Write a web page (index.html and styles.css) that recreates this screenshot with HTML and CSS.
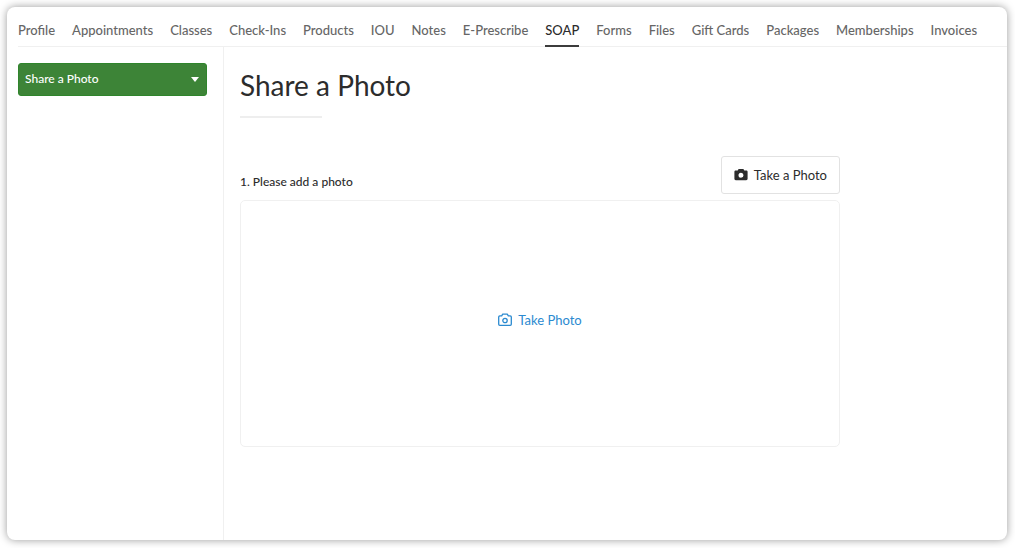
FILE: index.html
```html
<!DOCTYPE html>
<html lang="en">
<head>
  <meta charset="utf-8">
  <title>Share a Photo</title>
  <meta name="viewport" content="width=device-width, initial-scale=1.0">
  <link rel="stylesheet" href="styles.css">
</head>
<body>
  <div class="card">
    <nav class="tabs">
      <a href="#">Profile</a>
      <a href="#">Appointments</a>
      <a href="#">Classes</a>
      <a href="#">Check-Ins</a>
      <a href="#">Products</a>
      <a href="#">IOU</a>
      <a href="#">Notes</a>
      <a href="#">E-Prescribe</a>
      <a href="#" class="active" aria-current="page">SOAP</a>
      <a href="#">Forms</a>
      <a href="#">Files</a>
      <a href="#">Gift Cards</a>
      <a href="#">Packages</a>
      <a href="#">Memberships</a>
      <a href="#">Invoices</a>
    </nav>

    <div class="content">
      <aside class="sidebar">
        <div class="form-select">
          <select aria-label="SOAP form">
            <option>Share a Photo</option>
          </select>
        </div>
      </aside>

      <main class="main">
        <h1>Share a Photo</h1>

        <section class="question">
          <div class="question-head">
            <p>1. Please add a photo</p>
            <button type="button" class="btn-photo">
              <svg width="14" height="14" viewBox="0 0 14 14" aria-hidden="true">
                <path fill="currentColor" fill-rule="evenodd" d="M4.6.9h4.8l.9 1.6h1.9c.8 0 1.4.5 1.4 1.3v7c0 .8-.6 1.400-1.400 1.400H1.800C1 12.200.4 11.600.4 10.800v-7c0-.8.6-1.300 1.400-1.300h1.900zM7 4.700a2.500 2.500 0 1 0 0 5 2.500 2.500 0 0 0 0-5z"/>
              </svg>
              Take a Photo
            </button>
          </div>
          <div class="photo-box">
            <button type="button" class="link-photo">
              <svg width="14" height="14" viewBox="0 0 14 14" fill="none" stroke="currentColor" stroke-width="1.3" stroke-linejoin="round" aria-hidden="true">
                <path d="M4.700 1.200h4.600l1 1.600h1.900c.7 0 1.100.4 1.100 1.100v7.400c0 .7-.4 1.100-1.100 1.100H1.800c-.7 0-1.100-.4-1.100-1.100V3.900c0-.7.4-1.100 1.100-1.100h1.900z"/>
                <circle cx="7" cy="7.500" r="2.200"/>
              </svg>
              Take Photo
            </button>
          </div>
        </section>
      </main>
    </div>
  </div>
</body>
</html>
```
FILE: styles.css
```css
* {
  box-sizing: border-box;
}

body {
  margin: 0;
  padding: 7px 8px 8px 7px;
  min-height: 100vh;
  display: flex;
  background: #fff;
  color: #2c2c2c;
  font-family: Lato, "Open Sans", sans-serif;
  font-size: 13px;
  line-height: 16px;
}

button, select {
  font: inherit;
  cursor: pointer;
}

.card {
  flex: 1;
  min-width: 0;
  display: flex;
  flex-direction: column;
  background: #fff;
  border-radius: 8px;
  box-shadow: 0 0 8px rgba(0, 0, 0, 0.4);
  overflow: hidden;
}

/* top tabs */
.tabs {
  display: flex;
  gap: 17px;
  margin-left: 11px;
  border-bottom: 1px solid #f0f0f0;
}

.tabs a {
  padding: 15px 0 7px;
  margin-bottom: -1px;
  border-bottom: 2px solid transparent;
  color: #666;
  font-weight: 500;
  text-decoration: none;
  white-space: nowrap;
}

.tabs a.active {
  color: #2c2c2c;
  border-bottom-color: #3c3c3c;
}

.content {
  flex: 1;
  display: flex;
}

/* sidebar */
.sidebar {
  width: 217px;
  padding: 16px 16px 16px 11px;
  border-right: 1px solid #f0f0f0;
}

.form-select {
  position: relative;
}

.form-select select {
  display: block;
  width: 100%;
  height: 33px;
  padding: 0 24px 2px 6px;
  border: 1px solid #2f852c;
  border-radius: 3px;
  background: #3d8437;
  color: #fff;
  font-size: 12px;
  font-weight: 500;
  appearance: none;
}

.form-select::after {
  content: "";
  position: absolute;
  top: 14px;
  right: 8px;
  border: 4px solid transparent;
  border-top: 5px solid #fff;
  border-bottom: 0;
  pointer-events: none;
}

/* form */
.main {
  flex: 1;
  padding: 20px 16px;
}

h1 {
  margin: 0;
  font-size: 28px;
  font-weight: 400;
  line-height: 36px;
}

h1::after {
  content: "";
  display: block;
  width: 82px;
  height: 2px;
  margin-top: 13px;
  background: #eee;
}

.question {
  max-width: 600px;
  margin-top: 38px;
}

.question-head {
  display: flex;
  justify-content: space-between;
  align-items: flex-end;
  margin-bottom: 6px;
}

.question-head p {
  margin: 0 0 4px;
  font-size: 12px;
  font-weight: 500;
}

.btn-photo, .link-photo {
  display: flex;
  align-items: center;
  gap: 6px;
  background: none;
}

.btn-photo {
  height: 38px;
  padding: 0 12px;
  border: 1px solid #e2e2e2;
  border-radius: 3px;
  color: #2c2c2c;
}

.photo-box {
  display: flex;
  align-items: center;
  justify-content: center;
  min-height: 247px;
  padding: 16px 16px 24px;
  border: 1px solid #f0f0f0;
  border-radius: 5px;
}

.link-photo {
  padding: 0;
  border: 0;
  color: #2b8ad0;
}
```
